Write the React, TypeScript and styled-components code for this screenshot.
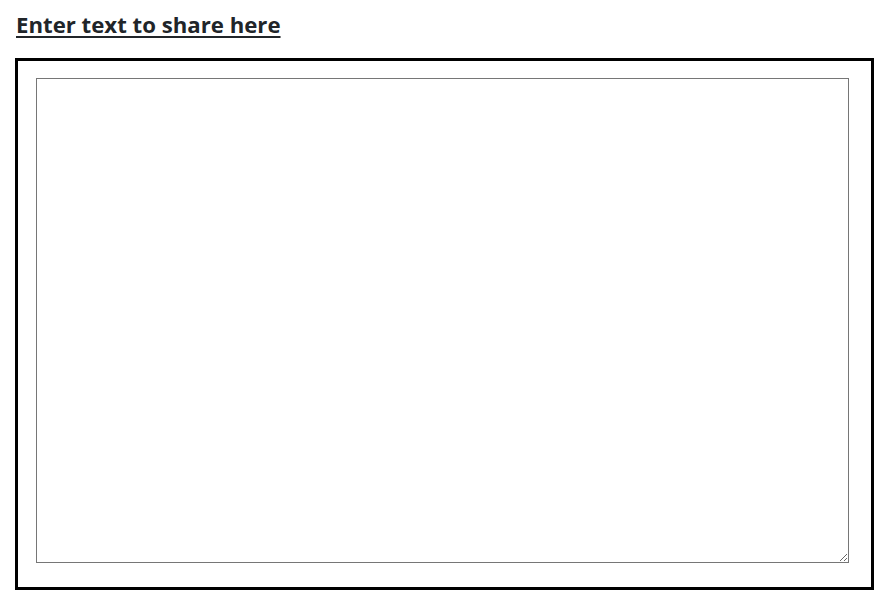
import React from "react";
import styled, { createGlobalStyle } from "styled-components";

const Global = createGlobalStyle`
  html, body { margin: 0; padding: 0; background: #fff; }
  body { font-family: "Open Sans", "Noto Sans", "Liberation Sans", sans-serif; color: #212529; }
`;

const Page = styled.div`
  display: flex;
  flex-direction: column;
  padding: 7px 12px 10px 15px;
`;

const Title = styled.h2`
  margin: 0 0 15px 1px;
  font-size: 22.2px;
  line-height: 36px;
  font-weight: 700;
  text-decoration: underline;
  text-decoration-thickness: 2px;
  text-underline-offset: 3px;
  color: #212529;
`;

const Frame = styled.div`
  border: 3px solid #000;
  height: 532px;
  box-sizing: border-box;
  padding: 17px 22px 24px 18px;
  display: flex;
`;

const TextBox = styled.textarea`
  flex: 1;
  margin: 0;
  border: 1px solid #767676;
  border-radius: 0;
  background: #fff;
  font-family: "Liberation Mono", monospace;
  font-size: 13px;
  padding: 2px;
`;

export default function App() {
  return (
    <>
      <Global />
      <Page>
        <Title>Enter text to share here</Title>
        <Frame>
          <TextBox />
        </Frame>
      </Page>
    </>
  );
}
